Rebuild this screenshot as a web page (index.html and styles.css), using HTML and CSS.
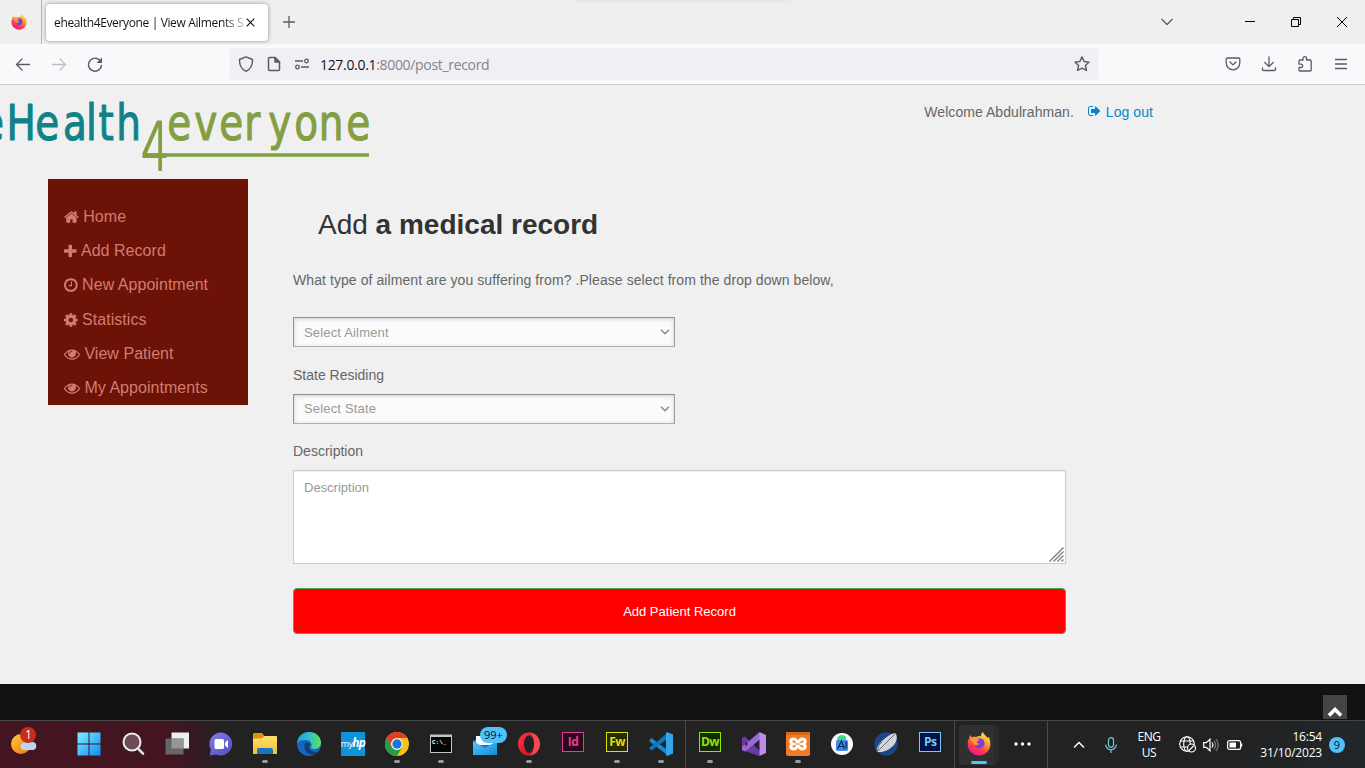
FILE: index.html
```html
<!DOCTYPE html>
<html lang="en">
<head>
<meta charset="utf-8">
<title>ehealth4Everyone | View Ailments Statistics</title>
<link rel="stylesheet" href="styles.css">
</head>
<body>
<svg class="defs" aria-hidden="true">
  <defs>
    <linearGradient id="fire" x1=".8" y1="0" x2=".3" y2="1"><stop offset="0" stop-color="#fff04a"/><stop offset=".4" stop-color="#ff9a28"/><stop offset=".7" stop-color="#ff3b4e"/><stop offset="1" stop-color="#e61587"/></linearGradient>
    <linearGradient id="win" x1="0" y1="0" x2="1" y2="1"><stop offset="0" stop-color="#7df0ff"/><stop offset="1" stop-color="#108bf5"/></linearGradient>
    <linearGradient id="edgeA" x1="0" y1="0" x2="1" y2="0"><stop offset="0" stop-color="#259be0"/><stop offset=".5" stop-color="#2ebfd2"/><stop offset="1" stop-color="#68e04c"/></linearGradient>
    <linearGradient id="chat" x1="0" y1="0" x2="1" y2="1"><stop offset="0" stop-color="#8a7ae8"/><stop offset="1" stop-color="#4b4fc0"/></linearGradient>
    <linearGradient id="folder" x1="0" y1="0" x2="0" y2="1"><stop offset="0" stop-color="#ffe071"/><stop offset="1" stop-color="#f9bd2c"/></linearGradient>
    <linearGradient id="mail" x1="0" y1="0" x2="1" y2="1"><stop offset="0" stop-color="#58c8f8"/><stop offset="1" stop-color="#1389d8"/></linearGradient>
    <linearGradient id="sun" x1="0" y1="0" x2="1" y2="1"><stop offset="0" stop-color="#ffca3b"/><stop offset="1" stop-color="#ef7410"/></linearGradient>
    <linearGradient id="opera" x1="0" y1="0" x2="1" y2="1"><stop offset="0" stop-color="#ff3344"/><stop offset="1" stop-color="#b90c1d"/></linearGradient>
    <symbol id="firefox" viewBox="0 0 24 24">
      <path fill="url(#fire)" d="M2 7q0-2 1.500-4 .3 1.600 1.600 2.400C6.700 4.500 8 5 9 5c2-1 3.700-1.300 5-.7C14 2.500 14.600 1 16 0c.6 2.700 3 3.400 4.500 6l1-1.300C23 7 23.500 9.500 23.300 13 22.800 19 18 23.500 12 23.500S.8 18.800.7 12.500C.6 10 1 8.300 2 7z"/>
      <path fill="#7542e5" d="M8 9c1-2.500 5-3.600 7.500-1.700 2.800 2 2.700 6.500-.3 8.400-3 1.800-7 .4-7.700-2.700 2 .7 4 .4 5-1.500-2.500 0-1.600-1.700-4.500-2.500z"/>
      <path fill="#ff9a28" d="M3.500 6.500c2-1.600 4.200-.8 5.500.2l3.500.8c-.5 1.500-2.700 1.300-3 2.700-.2 1 1 1.400 2.500 1.300-1 1.600-3.200 1.800-5 .8z"/>
    </symbol>
    <symbol id="eye" viewBox="0 0 1792 1792"><path fill="currentColor" d="M1664 960q-152-236-381-353 61 104 61 225 0 185-131.500 316.500T896 1280t-316.500-131.500T448 832q0-121 61-225-229 117-381 353 133 205 333.500 326.500T896 1408t434.500-121.500T1664 960zM944 576q0-20-14-34t-34-14q-125 0-214.500 89.500T592 832q0 20 14 34t34 14 34-14 14-34q0-86 61-147t147-61q20 0 34-14t14-34zm848 384q0 34-20 69-140 230-376.500 368.500T896 1536t-499.500-139T20 1029Q0 994 0 960t20-69q140-229 376.500-368T896 384t499.500 139T1772 891q20 35 20 69z"/></symbol>
  </defs>
</svg>

<header class="tabs">
  <div class="pinned"><svg width="16" height="16"><use href="#firefox"/></svg></div>
  <div class="tab"><span class="tab-title">ehealth4Everyone | View Ailments St</span>
    <svg class="tab-close" width="9" height="9" viewBox="0 0 9 9"><path d="M.7.7l7.600 7.600M8.300.7L.7 8.300" stroke="#15141a" stroke-width="1.200"/></svg></div>
  <svg class="new-tab" width="12" height="12" viewBox="0 0 12 12"><path d="M6 0v12M0 6h12" stroke="#5b5b66" stroke-width="1.300"/></svg>
  <div class="top-shade"></div>
  <div class="window-controls">
    <svg width="12" height="12" viewBox="0 0 12 12" fill="none"><path d="M.5 3L6 8.500 11.500 3" stroke="#5b5b66" stroke-width="1.300"/></svg>
    <svg width="10" height="10" viewBox="0 0 10 10"><path d="M0 4.500h10" stroke="#000"/></svg>
    <svg width="10" height="10" viewBox="0 0 10 10" fill="none" stroke="#000"><path d="M.5 2.500h7v7h-7zM2.500 2.500v-2h7v7h-2"/></svg>
    <svg width="10" height="10" viewBox="0 0 10 10"><path d="M0 0l10 10M10 0L0 10" stroke="#000"/></svg>
  </div>
</header>

<nav class="toolbar">
  <div class="nav-buttons">
    <svg width="16" height="16" viewBox="0 0 16 16" fill="none" stroke="#5b5b66" stroke-width="1.300" stroke-linecap="round"><path d="M1.500 8.500h13M7 3L1.500 8.500 7 14"/></svg>
    <svg width="16" height="16" viewBox="0 0 16 16" fill="none" stroke="#bfbfc6" stroke-width="1.300" stroke-linecap="round"><path d="M1.500 8.500h13M9 3l5.500 5.500L9 14"/></svg>
    <svg width="16" height="16" viewBox="0 0 16 16" fill="none" stroke="#5b5b66" stroke-width="1.400" stroke-linecap="round"><path d="M14 6A6.500 6.500 0 1 0 14.500 9.500"/><path d="M15 1.500V7H9.500z" fill="#5b5b66" stroke="none"/></svg>
  </div>
  <div class="urlbar">
    <svg width="16" height="16" viewBox="0 0 16 16" fill="none" stroke="#5b5b66" stroke-width="1.400" stroke-linejoin="round"><path d="M8 .8l6.500 2.700c.2 5.500-1.500 9.500-6.500 11.800C3 13 1.300 9 1.500 3.500z"/></svg>
    <svg width="16" height="16" viewBox="0 0 16 16" fill="none" stroke="#5b5b66" stroke-width="1.500" stroke-linejoin="round"><path d="M9 1.500H3.500a1 1 0 0 0-1 1v11a1 1 0 0 0 1 1h9a1 1 0 0 0 1-1V6z"/><path d="M9 1.500V6h4.500z" fill="#5b5b66"/></svg>
    <svg width="16" height="16" viewBox="0 0 16 16" fill="none" stroke="#5b5b66" stroke-width="1.300"><path d="M1 5h8M7 11h8"/><circle cx="12.500" cy="5" r="1.800"/><circle cx="3.500" cy="11" r="1.800"/></svg>
    <span class="url"><b>127.0.0.1</b>:8000/post_record</span>
    <svg class="star" width="16" height="16" viewBox="0 0 16 16" fill="none" stroke="#5b5b66" stroke-width="1.400" stroke-linejoin="round"><path d="M8 .9l2.100 4.600 5 .6-3.700 3.400 1 5L8 12.100l-4.400 2.400 1-5L.9 6.100l5-.6z"/></svg>
  </div>
  <div class="tools">
    <svg width="16" height="16" viewBox="0 0 16 16" fill="none" stroke="#5b5b66" stroke-width="1.300" stroke-linecap="round" stroke-linejoin="round"><path d="M2.200 2h11.600q1 0 1 1v4a6.800 6.800 0 0 1-13.600 0V3q0-1 1-1zM5 6l3 2.900L11 6"/></svg>
    <svg width="16" height="16" viewBox="0 0 16 16" fill="none" stroke="#5b5b66" stroke-width="1.300" stroke-linecap="round"><path d="M8 .8v9.700M3.800 6.500L8 10.700l4.200-4.200M1.500 12v1.500q0 1 1 1h11q1 0 1-1V12"/></svg>
    <svg width="16" height="16" viewBox="0 0 16 16" fill="none" stroke="#5b5b66" stroke-width="1.300" stroke-linejoin="round"><path d="M2 7V5q0-1 1-1h3V2.500a1.800 1.800 0 0 1 3.600 0V4h3.600q1 0 1 1v9q0 1-1 1H3q-1 0-1-1v-2.500h2a1.700 1.700 0 0 0 0-3.400H2z"/></svg>
    <svg width="16" height="16" viewBox="0 0 16 16" stroke="#5b5b66" stroke-width="1.300"><path d="M2 3.500h12M2 8h12M2 12.500h12"/></svg>
  </div>
</nav>

<div class="page">
  <div class="page-head">
    <svg class="logo" width="372" height="94" viewBox="0 0 372 94" role="img" aria-label="eHealth4everyone">
      <g class="logo-dark">
        <text transform="translate(0 54.500) scale(.78 1)" x="-25.800 8.200 45.100 80.800 110.100 126.400 149.200">eHealth</text>
      </g>
      <g class="logo-green">
        <text transform="translate(0 54.500) scale(.78 1)" x="214.400 249 281 313.300 343.900 377.200 408.800 443.900">everyone</text>
        <text class="logo-four" transform="translate(141 84.500) scale(.68 1)">4</text>
        <path d="M146 70H369" stroke="#839f42" stroke-width="3.500"/>
      </g>
    </svg>
    <div class="account">
      <span>Welcome Abdulrahman.</span>
      <a class="logout"><svg width="13" height="14" viewBox="0 0 1664 1792"><path fill="currentColor" d="M640 1440q0 4 1 20t.5 26.500-3 23.500-10 19.500-20.500 6.500H288q-119 0-203.500-84.500T0 1248V544q0-119 84.500-203.500T288 256h320q13 0 22.500 9.500T640 288q0 4 1 20t.5 26.500-3 23.500-10 19.500T608 384H288q-66 0-113 47t-47 113v704q0 66 47 113t113 47h312l11.500 1 11.500 3 8 5.500 7 9 2 13.500zm928-544q0 26-19 45l-544 544q-19 19-45 19t-45-19-19-45v-288H448q-26 0-45-19t-19-45V704q0-26 19-45t45-19h448V352q0-26 19-45t45-19 45 19l544 544q19 19 19 45z"/></svg><span>Log out</span></a>
    </div>
  </div>
  <div class="columns">
    <aside class="sidebar">
      <a><svg width="14.860" height="16" viewBox="0 0 1664 1792"><path fill="currentColor" d="M1408 992v480q0 26-19 45t-45 19h-384v-384h-256v384h-384q-26 0-45-19t-19-45v-480q0-1 .5-3t.5-3l575-474 575 474q1 2 1 6zm223-69l-62 74q-8 9-21 11h-3q-13 0-21-7l-692-577-692 577q-12 8-24 7-13-2-21-11l-62-74q-8-10-7-23.500t11-21.500l719-599q32-26 76-26t76 26l244 204v-195q0-14 9-23t23-9h192q14 0 23 9t9 23v408l219 182q10 8 11 21.500t-7 23.500z"/></svg><span>Home</span></a>
      <a><svg width="12.570" height="16" viewBox="0 0 1408 1792"><path fill="currentColor" d="M1408 800v192q0 40-28 68t-68 28H896v416q0 40-28 68t-68 28H608q-40 0-68-28t-28-68v-416H96q-40 0-68-28t-28-68V800q0-40 28-68t68-28h416V288q0-40 28-68t68-28h192q40 0 68 28t28 68v416h416q40 0 68 28t28 68z"/></svg><span>Add Record</span></a>
      <a><svg width="13.710" height="16" viewBox="0 0 1536 1792"><path fill="currentColor" d="M896 544v448q0 14-9 23t-23 9H544q-14 0-23-9t-9-23v-64q0-14 9-23t23-9h224V544q0-14 9-23t23-9h64q14 0 23 9t9 23zm416 352q0-148-73-273t-198-198-273-73-273 73-198 198-73 273 73 273 198 198 273 73 273-73 198-198 73-273zm224 0q0 209-103 385.500T1153.500 1561 768 1664t-385.500-103T103 1281.500 0 896t103-385.500T382.500 231 768 128t385.500 103T1433 510.500 1536 896z"/></svg><span>New Appointment</span></a>
      <a><svg width="13.710" height="16" viewBox="0 0 1536 1792"><path fill="currentColor" d="M1024 896q0-106-75-181t-181-75-181 75-75 181 75 181 181 75 181-75 75-181zm512-109v222q0 12-8 23t-20 13l-185 28q-19 54-39 91 35 50 107 138 10 12 10 25t-9 23q-27 37-99 108t-94 71q-12 0-26-9l-138-108q-44 23-91 38-16 136-29 186-7 28-36 28H657q-14 0-24.500-8.500T621 1635l-28-184q-49-16-90-37l-141 107q-10 9-25 9-14 0-25-11-126-114-165-168-7-10-7-23 0-12 8-23 15-21 51-66.500t54-70.500q-27-50-41-99L29 1040q-13-2-21-12.500T0 1004V782q0-12 8-23t19-13l186-28q14-46 39-92-40-57-107-138-10-12-10-24 0-10 9-23 26-36 98.500-107.500T337 262q13 0 26 10l138 107q44-23 91-38 16-136 29-186 7-28 36-28h222q14 0 24.500 8.500T915 157l28 184q49 16 90 37l142-107q9-9 24-9 13 0 25 10 129 119 165 170 7 8 7 22 0 12-8 23-15 21-51 66.500t-54 70.500q26 50 41 98l183 28q13 2 21 12.500t8 23.500z"/></svg><span>Statistics</span></a>
      <a><svg width="16" height="16"><use href="#eye"/></svg><span>View Patient</span></a>
      <a><svg width="16" height="16"><use href="#eye"/></svg><span>My Appointments</span></a>
    </aside>
    <main class="content">
      <h1>Add <b>a medical record</b></h1>
      <p class="intro">What type of ailment are you suffering from? .Please select from the drop down below,</p>
      <div class="select ailment"><span>Select Ailment</span><svg width="10" height="6" viewBox="0 0 10 6" fill="none"><path d="M1 .8l4 4 4-4" stroke="#8a8a8a" stroke-width="1.500"/></svg></div>
      <label class="label-state">State Residing</label>
      <div class="select"><span>Select State</span><svg width="10" height="6" viewBox="0 0 10 6" fill="none"><path d="M1 .8l4 4 4-4" stroke="#8a8a8a" stroke-width="1.500"/></svg></div>
      <label class="label-desc">Description</label>
      <div class="textarea"><span>Description</span><svg width="15" height="15" viewBox="0 0 15 15"><path d="M.5 14.500l14-14M4.500 14.500l10-10M8.500 14.500l6-6M12.500 14.500l2-2" stroke="#777" stroke-width="1.300"/></svg></div>
      <button class="submit">Add Patient Record</button>
    </main>
  </div>
</div>

<footer class="footer"><div class="to-top"><svg width="16" height="11" viewBox="0 0 16 11" fill="none"><path d="M2 8.500l6-6 6 6" stroke="#fff" stroke-width="3.600"/></svg></div></footer>

<div class="taskbar">
  <div class="weather">
    <svg width="36" height="32" viewBox="0 0 36 32"><circle cx="13" cy="17" r="10" fill="url(#sun)"/><path d="M15 23a3.700 3.700 0 0 1 0-7 5 5 0 0 1 9-1 4 4 0 0 1 .5 8z" fill="#b9d5f8"/><circle cx="20" cy="8" r="8" fill="#c62b1c"/></svg>
    <span class="weather-count">1</span>
  </div>
  <div class="apps">
    <div class="app"><svg width="24" height="24" viewBox="0 0 24 24"><path d="M.5.500h11v11H.5zM12.500.500h11v11h-11zM.5 12.500h11v11H.5zM12.500 12.500h11v11h-11z" fill="url(#win)"/></svg></div>
    <div class="app"><svg width="24" height="24" viewBox="0 0 24 24"><circle cx="11" cy="10" r="8.500" fill="#6e4a56" stroke="#ececec" stroke-width="2"/><path d="M17 16.500l5 5.200" stroke="#ddd" stroke-width="2.600" stroke-linecap="round"/></svg></div>
    <div class="app"><svg width="24" height="24" viewBox="0 0 24 24"><path d="M6.500.500h17.500v16H6.500z" fill="#eee"/><path d="M.5 6.500h18v16H.5z" fill="#656665"/><path d="M6.500 6.500h12v10h-12z" fill="#969696"/></svg></div>
    <div class="app"><svg width="24" height="24" viewBox="0 0 24 24"><path d="M12 .5a11.500 11.500 0 1 1-5 22L.8 23.500l1-6A11.500 11.500 0 0 1 12 .5z" fill="url(#chat)"/><rect x="5.500" y="7" width="9.500" height="10" rx="1.500" fill="#fff"/><path d="M16 10.500l3-2.500v8l-3-2.500z" fill="#fff"/></svg></div>
    <div class="app running"><svg width="24" height="24" viewBox="0 0 24 24"><path d="M0 2q0-1 1-1h8l2.500 3v4H0z" fill="#dc950b"/><path d="M0 6.500h9l2.500-2.500H23q1 0 1 1v17H0z" fill="url(#folder)"/><path d="M4 22v-4q0-2 2-2h12q2 0 2 2v4z" fill="#1675bd"/></svg></div>
    <div class="app"><svg width="24" height="24" viewBox="0 0 24 24"><circle cx="12" cy="12" r="12" fill="#1469bc"/><path d="M0 11.500C1 3.500 6.500 0 12 0c7 0 12 5 12 10.500 0 4-3 6.500-6.500 6.500-2.500 0-4-1-3.700-2 1.500-1 1.300-6.500-4.300-7C5.500 7.700 1.500 8.500 0 11.500z" fill="url(#edgeA)"/><path d="M8 11c-2.500 5 1.500 12 9 12 3-1 5-3 6-4.500-3 1.800-8 1.700-10-1-1.500-2-.8-4 .3-5C12 10.500 9.500 9.500 8 11z" fill="#123f7c"/></svg></div>
    <div class="app"><div class="myhp">my<b>hp</b></div></div>
    <div class="app running"><svg width="24" height="24" viewBox="0 0 24 24"><circle cx="12" cy="12" r="12" fill="#fbc116"/><path d="M1.600 6A12 12 0 0 1 22.400 6H12a6 6 0 0 0-5.500 8.500z" fill="#e33b2e"/><path d="M1.600 6A12 12 0 0 0 12 24l5.200-9a6 6 0 0 1-10.400 0z" fill="#269b48"/><circle cx="12" cy="12" r="5.700" fill="#fff"/><circle cx="12" cy="12" r="4.700" fill="#1a73e8"/></svg></div>
    <div class="app running"><svg width="24" height="24" viewBox="0 0 24 24"><path d="M1 2.500h22V21H1z" fill="#bfc4c8"/><path d="M2 5h20v15H2z" fill="#050505"/><text x="3" y="11.500" class="prompt">C:\_</text></svg></div>
    <div class="app"><svg class="mail" width="36" height="32" viewBox="0 0 36 32"><path d="M1 15l12-7 12 7v12H1z" fill="#1f73c5"/><path d="M4 10h20v9H4z" fill="#f5f9fd"/><path d="M1 15l12 7 12-7v14H1z" fill="url(#mail)"/><rect x="8" y="1" width="27" height="16" rx="8" fill="#4cc2ff"/><text x="12" y="13" class="mail-count">99+</text></svg></div>
    <div class="app running"><svg width="24" height="24" viewBox="0 0 24 24"><ellipse cx="12" cy="12" rx="11" ry="11.500" fill="url(#opera)"/><path d="M12 .5c6 0 11 5 11 11.500S18 23.500 12 23.500c3-.5 5-5 5-11.500S15 1 12 .5z" fill="#f34a50"/><ellipse cx="12" cy="12" rx="5" ry="8.700" fill="#222"/></svg></div>
    <div class="app"><div class="adobe indesign">Id</div></div>
    <div class="app running"><div class="adobe fireworks">Fw</div></div>
    <div class="app running"><svg width="24" height="24" viewBox="0 0 24 24"><path d="M.5 8l2-2L19 18.500v5L.5 9.500z" fill="#168ccf"/><path d="M.5 15.500L19 .5v6L2.500 18.500l-2-1.700z" fill="#0877bd"/><path d="M18 0l6 2.500v19L18 24l-1-1V1z" fill="#34a6ee"/></svg></div>
  </div>
  <div class="apps second">
    <div class="app running"><div class="adobe dreamweaver">Dw</div></div>
    <div class="app"><svg width="24" height="24" viewBox="0 0 24 24"><path d="M0 6l3-1.500L19 20l-2 4L0 18z" fill="#6c3aa5"/><path d="M0 18l3 1.500L20 6 17.500 0 0 15z" fill="#9c69d4"/><path d="M3.500 9.500v5L6 12zM17.500 8v8L12.500 12z" fill="#2a2330"/><path d="M17.500 0L24 3v18l-6.500 3z" fill="#bd8bea"/></svg></div>
    <div class="app running"><svg width="24" height="24" viewBox="0 0 24 24"><rect width="24" height="24" rx="2" fill="#f17c24"/><path d="M0 0h24v3H0z" fill="#d9651a"/><path d="M8 7c3 0 2 3 4 3s1-3 4-3c4 0 4 4 1 5 3 1 3 5-1 5-3 0-2-3-4-3s-1 3-4 3c-4 0-4-4-1-5-3-1-3-5 1-5z" fill="none" stroke="#fff" stroke-width="3"/></svg></div>
    <div class="app"><svg width="24" height="24" viewBox="0 0 24 24"><circle cx="12" cy="12" r="11" fill="#fafafa"/><path d="M7 8a5 5 0 0 1 9-3v4H7z" fill="#3ddc84"/><rect x="6" y="8" width="12" height="11" rx="1.500" fill="#4285f4"/><path d="M7.500 17l4-8 3 8M9 14.500h5M16 9.500v7" stroke="#083042" stroke-width="1.200" fill="none"/></svg></div>
    <div class="app"><svg width="24" height="24" viewBox="0 0 24 24"><circle cx="12" cy="12" r="11.700" fill="#1c4583"/><path d="M3 20c-1-6 2-8 5-11 4-4 8-7 13-8l1 1c2 4 0 9-3 12-4 4-8 5-11 6z" fill="#d2d4d8"/><path d="M3 20L17 6M3 20l2-7 3-3M17 6l4-4" stroke="#657083" fill="none"/></svg></div>
    <div class="app"><div class="adobe photoshop">Ps</div></div>
  </div>
  <div class="active-area"><div class="active-app"><svg width="24" height="24"><use href="#firefox"/></svg></div>
    <svg class="more" width="17" height="4" viewBox="0 0 17 4" fill="#fff"><circle cx="2" cy="2" r="1.700"/><circle cx="8.500" cy="2" r="1.700"/><circle cx="15" cy="2" r="1.700"/></svg></div>
  <div class="tray">
    <svg class="chevron" width="12" height="8" viewBox="0 0 12 8" fill="none"><path d="M1 6.500l5-5 5 5" stroke="#fff" stroke-width="1.500"/></svg>
    <svg class="mic" width="12" height="16" viewBox="0 0 12 16" fill="none" stroke="#70c9d8" stroke-width="1.200"><rect x="3.500" y=".7" width="5" height="9.500" rx="2.500"/><path d="M.7 7.500a5.300 5.300 0 0 0 10.600 0M6 12.800V16"/></svg>
    <div class="lang"><span>ENG</span><span>US</span></div>
    <svg class="globe" width="17" height="17" viewBox="0 0 17 17" fill="none" stroke="#fff" stroke-width="1.100"><circle cx="8" cy="8" r="7.300"/><ellipse cx="8" cy="8" rx="3.300" ry="7.300"/><path d="M1.500 5h13M1.500 11h8"/><circle cx="12.500" cy="12" r="4" fill="#202224"/><path d="M10 14.500l5-5"/></svg>
    <svg class="sound" width="16" height="14" viewBox="0 0 16 14" fill="none" stroke="#fff" stroke-width="1.200"><path d="M.7 4.700h2.600L7 1.200v11.600L3.300 9.300H.7zM9 4.500q1.700 2.500 0 5"/><path d="M11 2.700q3.300 4.300 0 8.600M13 1q4.400 6 0 12" stroke="#777"/></svg>
    <svg class="battery" width="16" height="10" viewBox="0 0 16 10"><rect x=".6" y=".6" width="13" height="8.800" rx="2" fill="none" stroke="#fff" stroke-width="1.200"/><rect x="2.500" y="2.500" width="6.500" height="5" fill="#fff"/><path d="M14.500 3.500v3" stroke="#fff" stroke-width="1.500"/></svg>
    <div class="clock"><span>16:54</span><span>31/10/2023</span></div>
    <div class="count">9</div>
  </div>
</div>
</body>
</html>
```

FILE: styles.css
```css
* { box-sizing: border-box; }
body { margin: 0; width: 1365px; height: 768px; overflow: hidden; display: flex; flex-direction: column; background: #f0f0f0; font-family: "Liberation Sans", Arial, sans-serif; color: #666; }
svg { display: block; flex: none; }
.defs { position: absolute; width: 0; height: 0; }

.tabs { position: relative; height: 44px; flex: none; display: flex; align-items: center; background: #efefef; font: 12px "Open Sans", sans-serif; color: #15141a; }
.pinned { width: 42px; height: 44px; padding: 14px 11px; border-right: 1px solid #b5b5b5; }
.tab { width: 222px; height: 37px; margin-left: 4px; padding-left: 8px; border-radius: 4px; background: #fff; box-shadow: 0 0 4px rgba(0,0,0,.4); display: flex; align-items: center; }
.tab-title { width: 190px; overflow: hidden; white-space: nowrap; letter-spacing: -.36px; -webkit-mask-image: linear-gradient(to right, #000 168px, transparent 198px); mask-image: linear-gradient(to right, #000 168px, transparent 198px); }
.tab-close { margin-left: 2px; }
.new-tab { margin-left: 15px; }
.top-shade { position: absolute; left: 575px; top: -7px; width: 215px; height: 6px; box-shadow: 0 0 6px rgba(0,0,0,.12); }
.window-controls { margin-left: auto; padding-right: 18px; display: flex; align-items: center; }
.window-controls svg:nth-child(2) { margin-left: 72px; }
.window-controls svg:nth-child(3), .window-controls svg:nth-child(4) { margin-left: 36px; }

.toolbar { height: 41px; flex: none; display: flex; align-items: center; background: #f9f9fb; border-bottom: 1px solid #cbcbcf; }
.nav-buttons { width: 230px; padding-left: 15px; display: flex; gap: 20px; }
.urlbar { width: 868px; height: 32px; padding: 0 8px; display: flex; align-items: center; gap: 12px; border-radius: 4px; background: #f0eff4; }
.url { margin-left: -2px; font: 14px "Open Sans", sans-serif; letter-spacing: -.32px; color: #85848c; }
.url b { font-weight: 400; color: #15141a; }
.star { margin-left: auto; }
.tools { margin-left: auto; padding-right: 16px; display: flex; gap: 20px; }

.page { height: 599px; flex: none; }
.page-head { height: 94px; display: flex; justify-content: space-between; }
.logo { font: 50px "DejaVu Sans", sans-serif; }
.logo text { stroke-width: 1.100; stroke-linejoin: round; }
.logo-dark { fill: #118287; stroke: #118287; }
.logo-green { fill: #839f42; stroke: #839f42; }
.logo .logo-four { font-size: 66px; font-weight: 200; stroke-width: 2.200; }
.account { padding: 19px 212px 0 0; display: flex; gap: 14px; font-size: 14px; line-height: 16px; letter-spacing: .06px; }
.logout { display: flex; gap: 5px; color: #0088cc; }
.columns { display: flex; align-items: flex-start; padding-left: 48px; }
.sidebar { width: 200px; height: 226px; padding: 20.500px 16px 0; background: #6c1206; color: #d27c70; font-size: 16px; }
.sidebar a { height: 34.350px; display: flex; align-items: center; gap: 4.400px; white-space: nowrap; letter-spacing: .04px; }
.content { width: 773px; margin-left: 45px; display: flex; flex-direction: column; align-items: flex-start; font-size: 14px; line-height: 20px; }
h1 { margin: 26px 0 0 25px; font-size: 28px; line-height: 40px; font-weight: 400; color: #333; }
.intro { margin: 25px 0 27px; letter-spacing: .075px; }
.select { width: 382px; height: 30px; padding: 0 4px 0 10px; display: flex; align-items: center; justify-content: space-between; border: 1px solid #aaa; border-color: #8f8f8f #999 #b0b0b0 #8f8f8f; background: #fbfbfb; box-shadow: inset 0 1px 4px rgba(0,0,0,.18); font-size: 13px; letter-spacing: .17px; color: #999; }
.ailment span { padding-top: 2px; }
.label-state { margin: 18px 0 9px; }
.label-desc { margin: 17px 0 9px; }
.textarea { width: 773px; height: 94px; padding: 7px 1px 1px 10px; display: flex; justify-content: space-between; border: 1px solid #ccc; background: #fff; box-shadow: inset 0 1px 1px rgba(0,0,0,.075); font-size: 13px; color: #999; }
.textarea svg { align-self: flex-end; }
.submit { width: 773px; height: 46px; margin-top: 24px; border: 1px solid #51a351; border-radius: 4px; background: #f00; color: #fff; font: 13px "Liberation Sans", Arial, sans-serif; }

.footer { height: 36px; flex: none; background: #111; display: flex; justify-content: flex-end; padding: 11px 18px 0; }
.to-top { width: 24px; height: 24px; padding: 12px 4px 0; background: #444; overflow: hidden; }

.taskbar { height: 48px; flex: none; display: flex; border-top: 1px solid #454545; background: linear-gradient(90deg, #431521 0, #431521 170px, #222 225px, #222 1240px, #20272b 1365px); }
.weather { position: relative; width: 66.500px; padding: 6px 0 0 8px; }
.weather-count { position: absolute; left: 25px; top: 5px; font: 12px/18px "Open Sans", sans-serif; color: #fff; }
.apps { display: flex; width: 619.500px; border-right: 1px solid #4b4b4b; }
.apps.second { width: 269px; padding-left: 2px; }
.app { position: relative; width: 44.050px; height: 47px; display: flex; justify-content: center; padding-top: 11px; flex: none; }
.running::after { content: ""; position: absolute; left: 19px; bottom: 5px; width: 6px; height: 3px; border-radius: 2px; background: #999; }
.myhp { width: 24px; height: 24px; background: #0c95d5; color: #fff; font: 9px/22px "Open Sans", sans-serif; letter-spacing: -.7px; text-align: center; }
.myhp b { font-size: 12px; font-style: italic; }
.prompt { font: bold 6px "Liberation Mono", monospace; fill: #fff; }
.mail { margin-top: -6px; margin-left: 10px; }
.mail-count { font: 11px "Open Sans", sans-serif; fill: #111; }
.adobe { width: 22px; height: 20px; border: 1.500px solid; font: bold 12px/18px "Open Sans", sans-serif; letter-spacing: -.6px; text-align: center; }
.indesign { color: #e23c97; background: #2d071e; }
.fireworks { color: #dfdf00; background: #292900; }
.dreamweaver { color: #8be700; background: #172900; }
.photoshop { color: #7bc7fa; background: #001247; }
.active-area { width: 93px; padding: 4px 0 0 4px; display: flex; border-right: 1px solid #4b4b4b; }
.active-app { position: relative; width: 40px; height: 40px; padding: 7px 8px; border-radius: 4px; border-right: 5px solid #2a2a2a; background: #303030; }
.active-app::after { content: ""; position: absolute; left: 12px; bottom: 1px; width: 16px; height: 3px; border-radius: 2px; background: #4cc2ff; }
.more { margin: 17px 0 0 15px; }
.tray { flex: 1; display: flex; align-items: center; font: 12px/16px "Open Sans", sans-serif; color: #fff; }
.chevron { margin-left: 25px; }
.mic { margin-left: 20px; }
.lang { width: 30px; margin-left: 17px; display: flex; flex-direction: column; align-items: center; letter-spacing: -.4px; }
.globe { margin-left: 15px; }
.sound { margin-left: 7px; }
.battery { margin-left: 8px; }
.clock { width: 79px; display: flex; flex-direction: column; align-items: flex-end; letter-spacing: -.2px; }
.count { width: 16px; height: 16px; margin-left: 7px; border-radius: 50%; background: #4cc2ff; color: #111; font-size: 11px; text-align: center; }
```
